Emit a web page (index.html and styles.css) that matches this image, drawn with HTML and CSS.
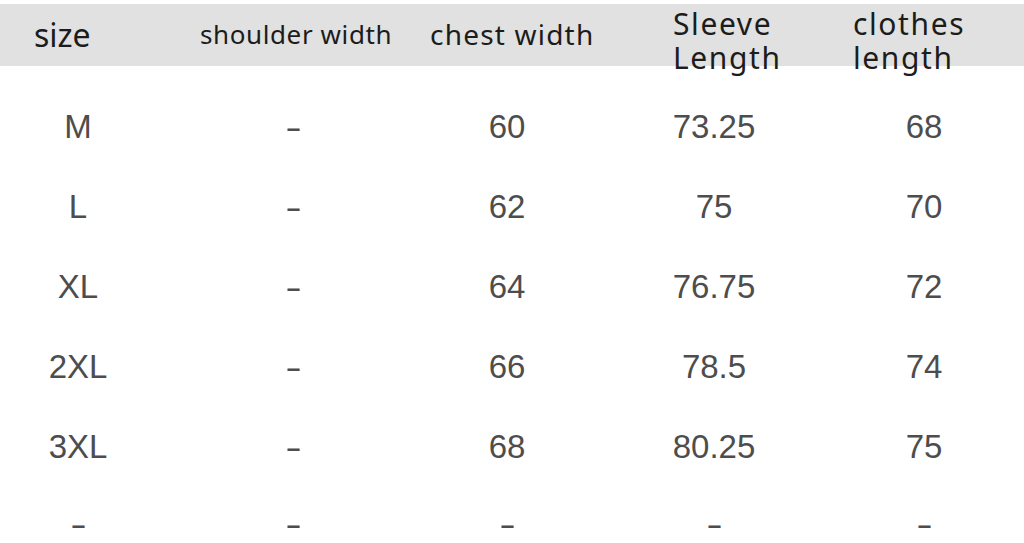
FILE: index.html
```html
<!DOCTYPE html>
<html>
<head>
<meta charset="utf-8">
<link rel="stylesheet" href="styles.css">
</head>
<body>
<div class="chart">
  <div class="head">
    <div class="hcell h-size">size</div>
    <div class="hcell h-shoulder">shoulder width</div>
    <div class="hcell h-chest">chest width</div>
    <div class="hcell h-two"><span class="line">Sleeve</span><span class="line">Length</span></div>
    <div class="hcell h-two"><span class="line">clothes</span><span class="line">length</span></div>
  </div>
  <div class="rows">
    <div class="row"><span>M</span><span><i class="dash">-</i></span><span>60</span><span>73.25</span><span>68</span></div>
    <div class="row"><span>L</span><span><i class="dash">-</i></span><span>62</span><span>75</span><span>70</span></div>
    <div class="row"><span>XL</span><span><i class="dash">-</i></span><span>64</span><span>76.75</span><span>72</span></div>
    <div class="row"><span>2XL</span><span><i class="dash">-</i></span><span>66</span><span>78.5</span><span>74</span></div>
    <div class="row"><span>3XL</span><span><i class="dash">-</i></span><span>68</span><span>80.25</span><span>75</span></div>
    <div class="row row-last"><span><i class="dash">-</i></span><span><i class="dash">-</i></span><span><i class="dash">-</i></span><span><i class="dash">-</i></span><span><i class="dash">-</i></span></div>
  </div>
</div>
</body>
</html>
```
FILE: styles.css
```css
html, body {
  margin: 0;
  padding: 0;
  background: #ffffff;
}
body {
  width: 1024px;
  height: 543px;
  overflow: hidden;
}
.chart {
  padding-top: 4px;
}
.head {
  height: 62px;
  background: #e1e1e1;
  display: grid;
  grid-template-columns: 200px 230px 243px 180px 1fr;
  align-items: start;
  font-family: "Noto Sans", "Open Sans", sans-serif;
  color: #1c1c1c;
}
.hcell {
  white-space: nowrap;
}
.h-size {
  padding-left: 34px;
  padding-top: 11px;
  font-size: 32px;
  line-height: 40px;
}
.h-shoulder {
  padding-top: 14px;
  font-size: 26px;
  line-height: 32px;
  letter-spacing: 0.6px;
}
.h-chest {
  padding-top: 13px;
  font-size: 28px;
  line-height: 34px;
  letter-spacing: 1.2px;
}
.h-two {
  padding-top: 3px;
  font-size: 30px;
  line-height: 34px;
  letter-spacing: 1.6px;
}
.line {
  display: block;
}
.rows {
  padding-top: 21px;
}
.row {
  display: grid;
  grid-template-columns: 156px 274px 154px 260px 160px;
  height: 80px;
  line-height: 80px;
  font-family: "Liberation Sans", Arial, sans-serif;
  font-size: 33px;
  color: #4d4d4d;
  text-align: center;
}
.row-last {
  height: 32px;
  line-height: 32px;
  padding-top: 21px;
}
.dash {
  font-style: normal;
  display: inline-block;
  transform: scaleX(1.5) translateY(1px);
}
```
